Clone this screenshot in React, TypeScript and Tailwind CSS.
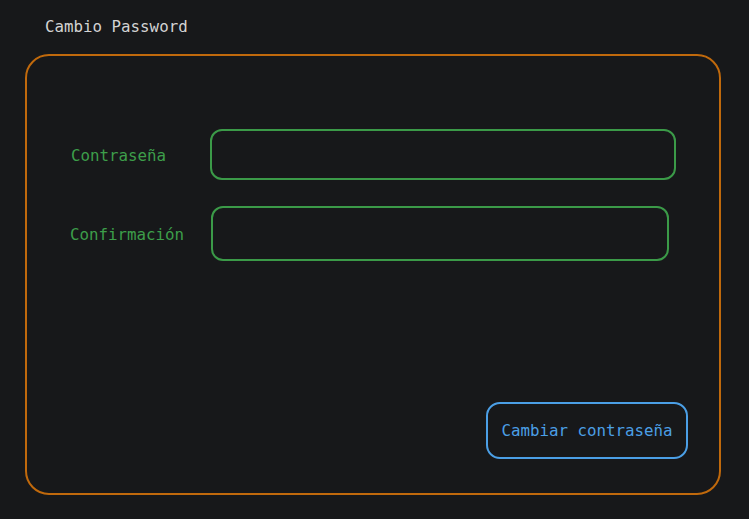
export default function App() {
  return (
    <div className="min-h-screen w-full bg-[#17181a] font-['DejaVu_Sans_Mono',monospace] text-[15.8px]">
      <div className="h-[54px] pl-[45px] pt-[16px] leading-[22px] text-[#d3d3d3]">Cambio Password</div>
      <div className="ml-[25px] flex h-[441px] w-[696px] flex-col rounded-[24px] border-2 border-[#c0690c]">
        <div className="mt-[73px] flex items-center">
          <span className="w-[183px] pl-[44px] pt-[3px] text-[#3d9e4a]">Contraseña</span>
          <div className="h-[51px] w-[466px] rounded-[12px] border-2 border-[#3b9a48]" />
        </div>
        <div className="mt-[26px] flex items-center">
          <span className="w-[184px] pl-[43px] pt-[3px] text-[#3d9e4a]">Confirmación</span>
          <div className="h-[55px] w-[458px] rounded-[12px] border-2 border-[#3b9a48]" />
        </div>
        <button className="mb-[34px] mr-[31px] mt-auto flex h-[57px] w-[202px] items-center justify-center self-end rounded-[14px] border-2 border-[#4b9fe6] pt-[1px] text-[#4b9fe6]">
          Cambiar contraseña
        </button>
      </div>
    </div>
  )
}
